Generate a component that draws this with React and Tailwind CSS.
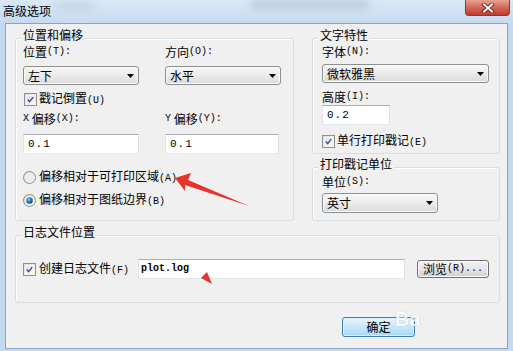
import React from "react";

function M({ children }) {
  // mnemonic part "(T):" drawn in a narrow mono face like the old dialog font
  return <span className="font-['Liberation_Mono',monospace] text-[10px] leading-[14px]">{children}</span>;
}

function Label({ children, className = "" }) {
  return <div className={`flex h-[14px] items-center whitespace-nowrap ${className}`}>{children}</div>;
}

function Select({ value, className }) {
  return (
    <div className={`flex h-[19px] items-center justify-between rounded-[3px] border border-[#8e8f8f] bg-gradient-to-b from-[#f7f7f7] via-[#ebebeb] to-[#dadada] pl-[4px] pr-[4px] shadow-[inset_0_0_0_1px_#fbfbfb] ${className}`}>
      <span>{value}</span>
      <svg width="7" height="4" viewBox="0 0 7 4">
        <polygon points="0,0 7,0 3.5,4" fill="#000" />
      </svg>
    </div>
  );
}

function TextBox({ value, className }) {
  return (
    <div className={`flex h-[20px] items-center border border-[#abadb3] border-l-[#e2e3ea] border-r-[#dbdfe6] border-b-[#e3e9ef] bg-white pl-[4px] font-['Liberation_Mono',monospace] text-[11px] tracking-[1px] ${className}`}>
      {value}
    </div>
  );
}

function Check() {
  return (
    <div className="flex h-[13px] w-[13px] shrink-0 items-center justify-center border border-[#8f8f8f] bg-gradient-to-br from-[#dcdcdc] to-[#fbfbfb] p-[1px]">
      <div className="flex h-full w-full items-center justify-center border border-[#f4f4f4] bg-gradient-to-br from-[#e4e4e4] to-[#f8f8f8]">
        <svg width="9" height="9" viewBox="0 0 9 9">
          <path d="M1 4.6 L3.4 7.2 L8 1.4" fill="none" stroke="#3a4f9a" strokeWidth="1.9" />
        </svg>
      </div>
    </div>
  );
}

function Radio({ checked }) {
  return (
    <svg width="13" height="13" viewBox="0 0 13 13" className="shrink-0">
      <defs>
        <linearGradient id="rbg" x1="0" y1="0" x2="1" y2="1">
          <stop offset="0" stopColor="#cfcfcf" />
          <stop offset="1" stopColor="#fbfbfb" />
        </linearGradient>
        <radialGradient id="rdot" cx="0.4" cy="0.35" r="0.7">
          <stop offset="0" stopColor="#8bd0f5" />
          <stop offset="0.5" stopColor="#2a7fb9" />
          <stop offset="1" stopColor="#0d3659" />
        </radialGradient>
      </defs>
      <circle cx="6.5" cy="6.5" r="6" fill="url(#rbg)" stroke="#8f8f8f" />
      <circle cx="6.5" cy="6.5" r="4.4" fill="#ececec" stroke="#f6f6f6" strokeWidth="0.6" />
      {checked && <circle cx="6.5" cy="6.5" r="3.2" fill="url(#rdot)" />}
    </svg>
  );
}

function Group({ title, className, children }) {
  return (
    <div className={`rounded-[3px] border border-[#d5dfe5] shadow-[inset_1px_1px_0_#ffffff] ${className}`}>
      <div className="-mt-[11px] ml-[5px] h-[14px] w-fit bg-[#f0f0f0] px-[2px] leading-[14px]">{title}</div>
      {children}
    </div>
  );
}

export default function App() {
  return (
    <div className="relative h-[351px] w-[513px] overflow-hidden bg-[#c3d9ef] font-['Noto_Sans_CJK_SC',sans-serif] text-[12px] leading-[14px] text-black">
      {/* Title bar */}
      <div className="relative flex h-[23px] items-start justify-between bg-gradient-to-b from-[#dae8f6] to-[#c6dbf0]">
        <div className="absolute left-[250px] top-[0px] h-[9px] w-[120px] rounded-full bg-[#9fb1c6] opacity-50 blur-[4px]"></div>
        <div className="absolute left-[55px] top-[2px] h-[8px] w-[40px] rounded-full bg-[#b4c4d6] opacity-50 blur-[4px]"></div>
        <span className="relative pl-[3px] pt-[4px]">高级选项</span>
        <div className="relative mr-[3px] flex h-[16px] w-[45px] items-center justify-center rounded-b-[4px] border border-t-0 border-[#8a3a2e] bg-gradient-to-b from-[#e7a193] via-[#d4685a] to-[#c0392b]">
          <svg width="14" height="10" viewBox="0 0 14 10">
            <path d="M3 1.5 L11 8.5 M11 1.5 L3 8.5" stroke="#4b1a14" strokeWidth="3.6" strokeLinecap="square" />
            <path d="M3 1.5 L11 8.5 M11 1.5 L3 8.5" stroke="#ffffff" strokeWidth="2" strokeLinecap="square" />
          </svg>
        </div>
      </div>

      {/* Client area */}
      <div className="mx-[5px] h-[326px] border border-[#8aa4c1] bg-[#f0f0f0] pl-[9px] pt-[14px]">
        <div className="flex items-start gap-[18px]">
          {/* 位置和偏移 */}
          <Group title="位置和偏移" className="h-[183px] w-[279px]">
            <div className="pl-[7px]">
              <div className="mt-[3px] grid grid-cols-[142px_116px]">
                <Label>位置<M>(T):</M></Label>
                <Label>方向<M>(O):</M></Label>
              </div>
              <div className="mt-[7px] grid grid-cols-[142px_116px]">
                <Select value="左下" className="w-[116px]" />
                <Select value="水平" className="w-[116px]" />
              </div>
              <Label className="mt-[7px] gap-[2px] pl-[1px]">
                <Check />
                <span>戳记倒置<M>(U)</M></span>
              </Label>
              <div className="mt-[6px] grid grid-cols-[142px_116px]">
                <Label><M>X</M>&nbsp;偏移<M>(X):</M></Label>
                <Label><M>Y</M>&nbsp;偏移<M>(Y):</M></Label>
              </div>
              <div className="mt-[8px] grid grid-cols-[142px_116px]">
                <TextBox value="0.1" className="w-[116px]" />
                <TextBox value="0.1" className="w-[114px]" />
              </div>
              <Label className="mt-[16px] gap-[3px]">
                <Radio />
                <span>偏移相对于可打印区域<M>(A)</M></span>
              </Label>
              <Label className="mt-[9px] gap-[3px]">
                <Radio checked />
                <span>偏移相对于图纸边界<M>(B)</M></span>
              </Label>
            </div>
          </Group>

          <div className="flex w-[188px] flex-col">
            <Group title="文字特性" className="h-[116px]">
              <div className="pl-[9px]">
                <Label className="mt-[3px]">字体<M>(N):</M></Label>
                <Select value="微软雅黑" className="mt-[5px] w-[167px]" />
                <Label className="mt-[7px]">高度<M>(I):</M></Label>
                <TextBox value="0.2" className="mt-[1px] w-[68px]" />
                <Label className="mt-[9px] gap-[2px]">
                  <Check />
                  <span>单行打印戳记<M>(E)</M></span>
                </Label>
              </div>
            </Group>
            <Group title="打印戳记单位" className="mt-[13px] h-[54px]">
              <div className="pl-[9px]">
                <Label className="mt-[4px]">单位<M>(S):</M></Label>
                <Select value="英寸" className="mt-[4px] h-[20px] w-[116px]" />
              </div>
            </Group>
          </div>
        </div>

        {/* 日志文件位置 */}
        <Group title="日志文件位置" className="mt-[14px] h-[68px] w-[485px]">
          <div className="mt-[20px] flex h-[20px] items-center pl-[7px]">
            <div className="flex w-[115px] items-center gap-[3px]">
              <Check />
              <span>创建日志文件<M>(F)</M></span>
            </div>
            <div className="flex h-[20px] w-[267px] items-center border border-[#abadb3] border-l-[#e2e3ea] border-r-[#dbdfe6] border-b-[#e3e9ef] bg-white pl-[2px] font-['Liberation_Mono',monospace] text-[10px] font-bold">
              plot.log
            </div>
            <div className="ml-[12px] flex h-[18px] w-[72px] items-center justify-center rounded-[3px] border border-[#707070] bg-gradient-to-b from-[#f2f2f2] via-[#e6e6e6] to-[#d0d0d0] shadow-[inset_0_0_0_1px_#fcfcfc]">
              浏览<M>(R)...</M>
            </div>
          </div>
        </Group>

        <div className="ml-[327px] mt-[14px] flex h-[20px] w-[73px] items-center justify-center rounded-[3px] border border-[#3c7fb1] bg-gradient-to-b from-[#eaf6fd] via-[#c6e7f9] to-[#a7d9f5] shadow-[inset_0_0_0_1px_#d9f0fc]">
          确定
        </div>
      </div>

      {/* red annotation arrows */}
      <svg className="pointer-events-none absolute left-0 top-0" width="513" height="351" viewBox="0 0 513 351">
        <polygon points="175,178 191,173 188,180 249,206 185,185 185,191" fill="#e8322c" />
        <polygon points="201,278 207,272 212,284" fill="#e8322c" />
      </svg>

      {/* watermark */}
      <div className="pointer-events-none absolute left-[395px] top-[309px] font-['Liberation_Sans',sans-serif] text-[20px] font-bold leading-[20px] text-white opacity-80 [text-shadow:0_0_1px_#9a9a9a]">
        Ba
      </div>
    </div>
  );
}
